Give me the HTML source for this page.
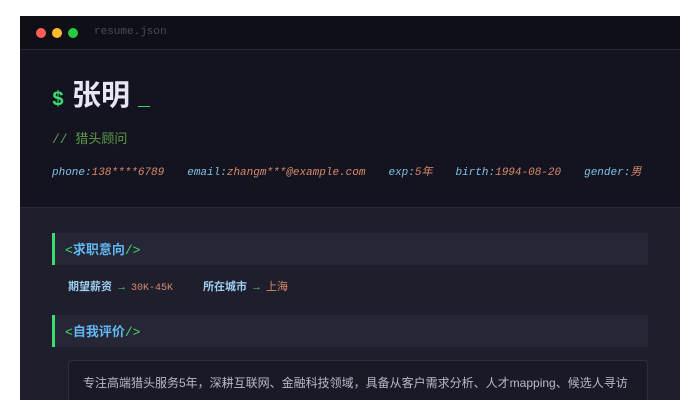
<!DOCTYPE html>
<html><head><meta charset="utf-8"><style>
*{margin:0;padding:0;box-sizing:border-box}
html,body{width:700px;height:400px;overflow:hidden}
body{background:#fff;position:relative;font-family:"Liberation Sans","Noto Sans CJK SC",sans-serif}
.win{position:absolute;left:20px;top:16px;width:660px;height:384px;background:#1e1e2c;overflow:hidden}
.tb{height:34px;background:#0f0f17;border-bottom:1px solid #262636;position:relative}
.dot{position:absolute;top:12px;width:10px;height:10px;border-radius:50%}
.tt{position:absolute;left:74px;top:10px;font:11px "Liberation Mono",monospace;color:#4a4a58}
.hd{height:158px;background:#141420;border-bottom:1px solid #2a2a3c;position:relative}
.nm{position:absolute;left:32px;top:22px;font-size:29px;font-weight:bold;color:#e8e6f5}
.nm .d{color:#3ddc6e;font-size:20px;font-family:"Liberation Mono",monospace;margin-right:8px}
.nm .c{color:#3ddc6e;font-weight:normal;font-size:20px;font-family:"Liberation Mono",monospace;margin-left:8px}
.sub{position:absolute;left:32px;top:78px;font-size:13px;color:#5c9a4a;font-family:"Liberation Mono","Noto Sans CJK SC",monospace}
.info{position:absolute;left:32px;top:113px;font:italic 11px "Liberation Mono","Noto Sans CJK SC",monospace;white-space:nowrap}
.info>span{margin-right:23px}
.k{color:#7fc0e6}.v{color:#d98a6a}
.sec{position:absolute;left:32px;width:596px;height:32px;background:#262636;border-left:3px solid #3ddc6e;padding:6px 0 0 10px;font-size:13px;font-weight:bold;color:#5fb8f0}
.sec i{font-style:normal;font-weight:normal;color:#3ddc6e;font-family:"Liberation Mono",monospace}
.row{position:absolute;left:48px;top:262px;font-size:11px;white-space:nowrap}
.row b{color:#9ecff0}
.row .a{color:#3ddc6e;margin:0 4px}
.box{position:absolute;left:48px;top:344px;width:580px;height:80px;background:#1a1a27;border:1px solid #2e2e40;border-radius:4px;padding:10px 14px;font-size:12px;line-height:25px;color:#b8b8c8;white-space:nowrap;overflow:hidden}
</style></head><body>
<div class="win">
<div class="tb"><div class="dot" style="left:16px;background:#ff5f56"></div><div class="dot" style="left:32px;background:#ffbd2e"></div><div class="dot" style="left:48px;background:#27c93f"></div><div class="tt">resume.json</div></div>
<div class="hd">
<div class="nm"><span class="d">$</span>张明<span class="c">_</span></div>
<div class="sub">// 猎头顾问</div>
<div class="info"><span><span class="k">phone:</span><span class="v">138****6789</span></span><span><span class="k">email:</span><span class="v">zhangm***@example.com</span></span><span><span class="k">exp:</span><span class="v">5年</span></span><span><span class="k">birth:</span><span class="v">1994-08-20</span></span><span><span class="k">gender:</span><span class="v">男</span></span></div>
</div>
<div class="sec" style="top:217px"><i>&lt;</i>求职意向<i>/&gt;</i></div>
<div class="row"><b>期望薪资</b><span class="a">→</span><span class="v" style="font-family:'Liberation Mono',monospace;font-size:10px">30K-45K</span><span style="display:inline-block;width:30px"></span><b>所在城市</b><span class="a">→</span><span class="v">上海</span></div>
<div class="sec" style="top:299px"><i>&lt;</i>自我评价<i>/&gt;</i></div>
<div class="box">专注高端猎头服务5年，深耕互联网、金融科技领域，具备从客户需求分析、人才mapping、候选人寻访<br>到offer谈判的全流程服务能力，累计成功交付中高端职位150+个，涵盖CTO、VP、总监等高管岗位，平</div>
</div>
</body></html>
